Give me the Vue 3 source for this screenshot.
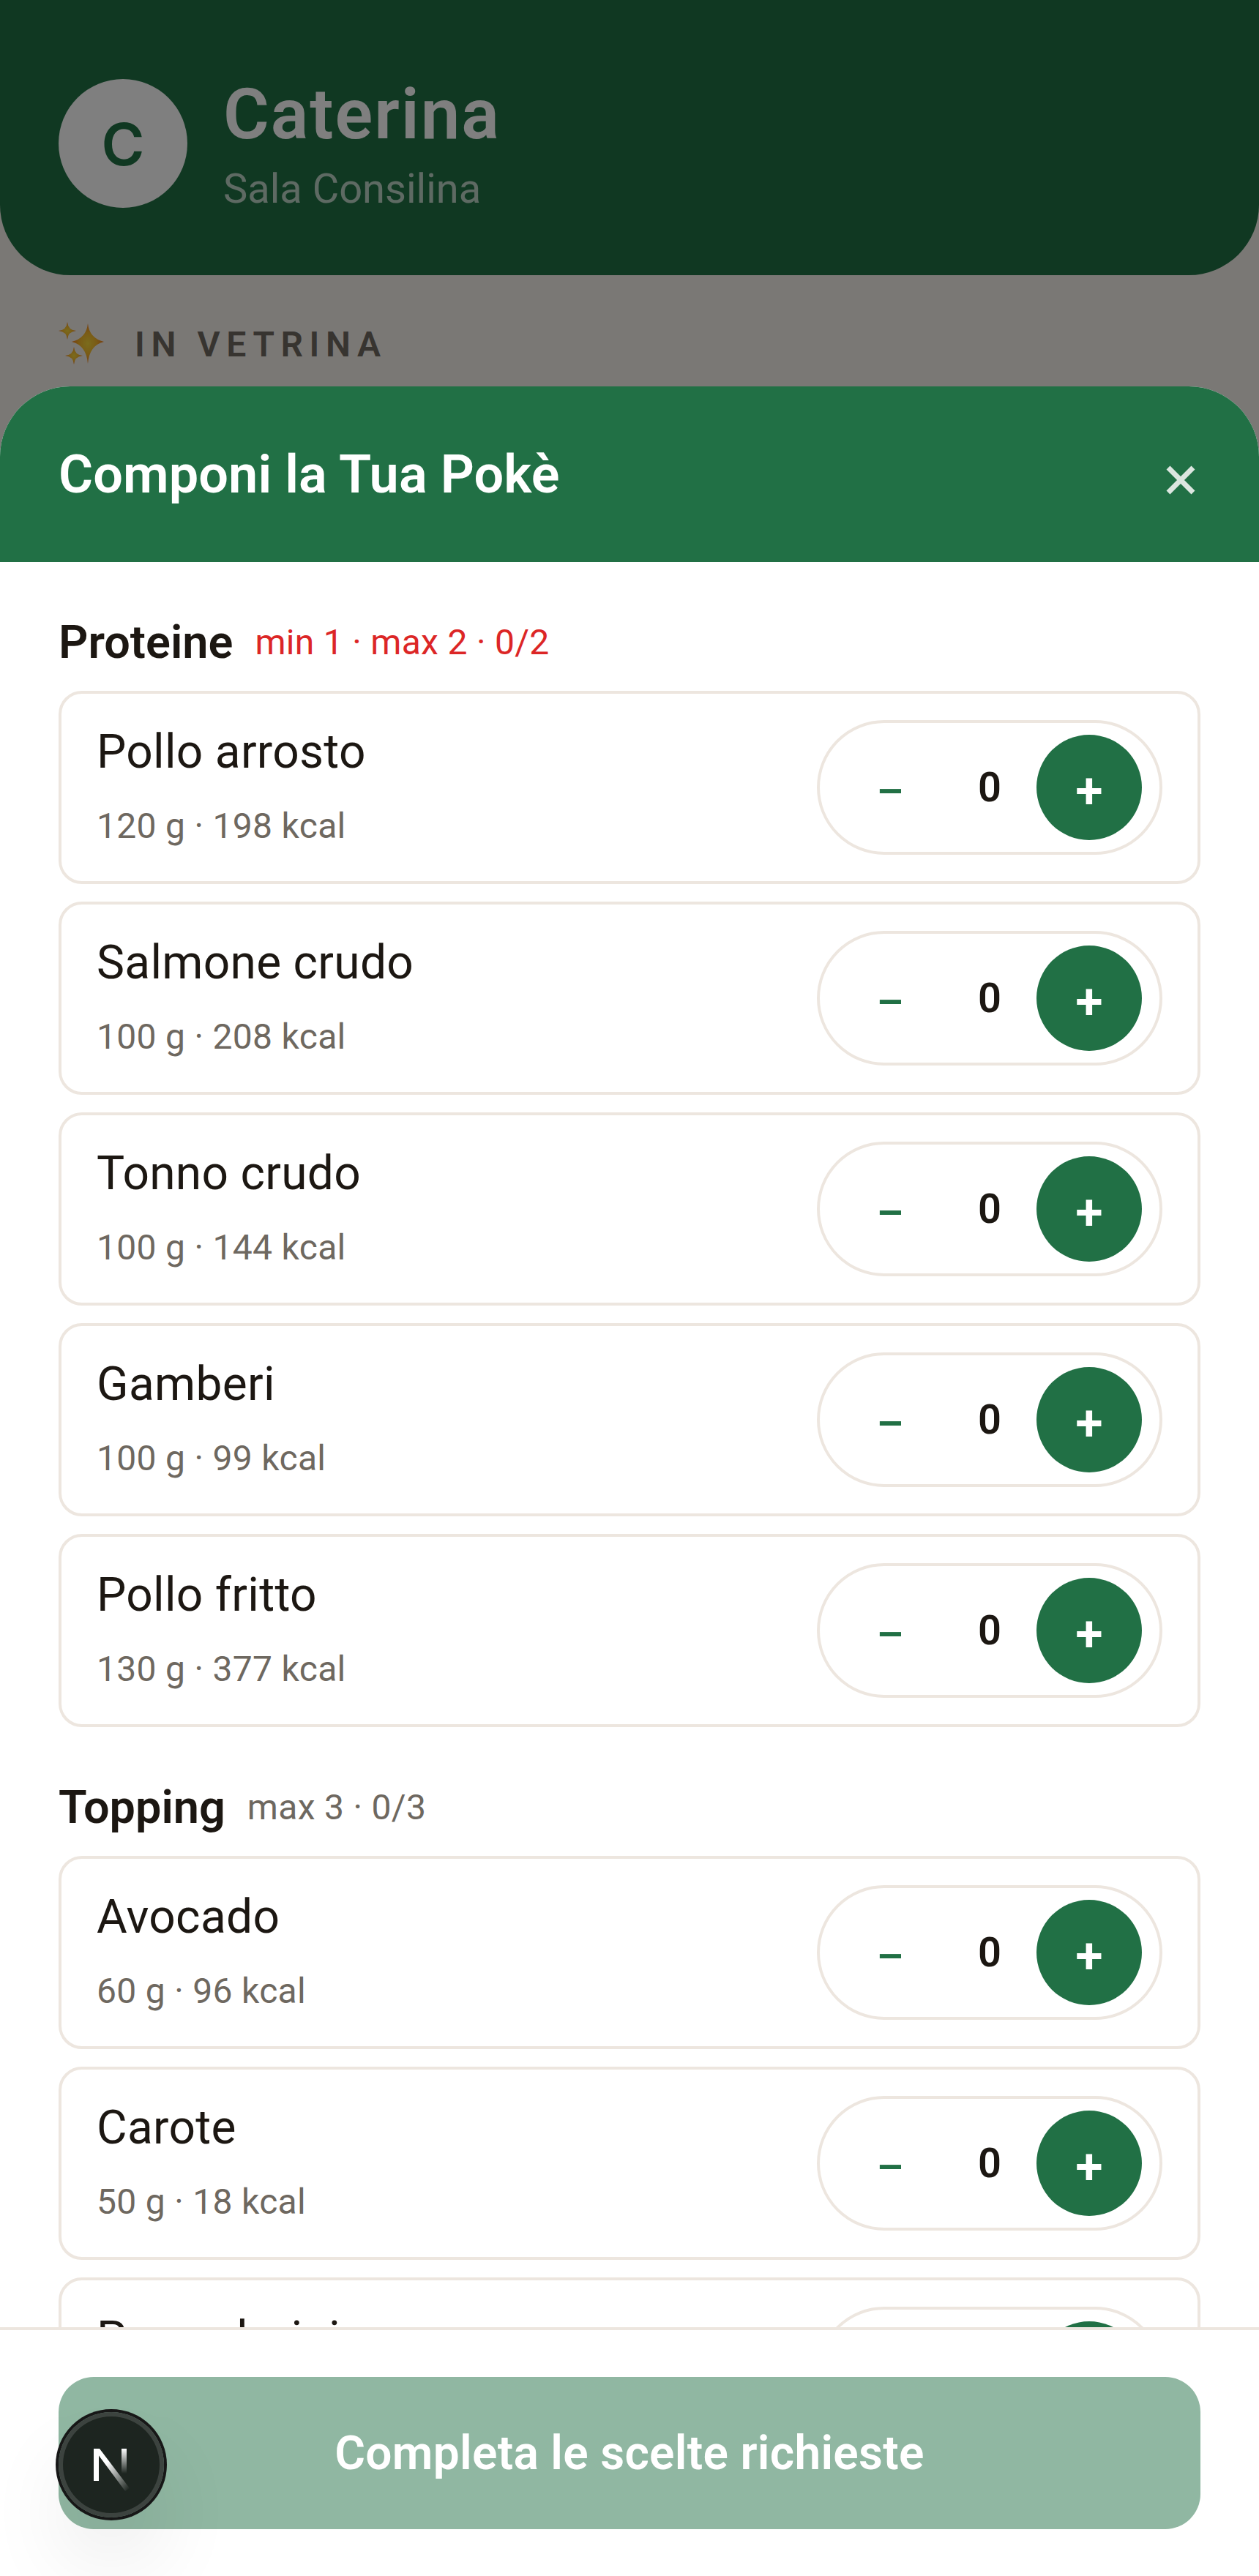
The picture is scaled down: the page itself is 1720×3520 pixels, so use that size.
<template>
  <div class="page">
    <header class="top">
      <div class="avatar">C</div>
      <div>
        <div class="name">Caterina</div>
        <div class="city">Sala Consilina</div>
      </div>
    </header>
    <div class="showcase">
      <svg class="stars" viewBox="0 0 64 60" width="64" height="60">
        <defs>
          <radialGradient id="gold">
            <stop offset="0" stop-color="#f6d83a" />
            <stop offset="0.55" stop-color="#f4b62c" />
            <stop offset="1" stop-color="#ee7a1c" />
          </radialGradient>
        </defs>
        <path fill="url(#gold)" d="M40 2 Q42 22 62 27 Q42 32 40 57 Q38 32 18 27 Q38 22 40 2Z" />
        <path fill="url(#gold)" d="M12 0 Q13 11 24 12 Q13 13 12 24 Q11 13 0 12 Q11 11 12 0Z" />
        <path fill="url(#gold)" d="M21 34 Q22 45 33 46 Q22 47 21 58 Q20 47 9 46 Q20 45 21 34Z" />
      </svg>
      <span>IN VETRINA</span>
    </div>

    <div class="overlay"></div>

    <section class="sheet">
      <div class="sheet-head">
        <h2>Componi la Tua Pokè</h2>
        <svg class="close" viewBox="0 0 40 40" width="40" height="40">
          <path d="M3 3 L37 37 M37 3 L3 37" stroke="#dce6e0" stroke-width="7" fill="none" />
        </svg>
      </div>
      <div class="sheet-body">
        <div v-for="group in groups" :key="group.title" class="group">
          <div class="group-head">
            <h3>{{ group.title }}</h3>
            <span :class="{ required: group.required }">{{ group.rule }}</span>
          </div>
          <div class="list">
            <div v-for="item in group.items" :key="item.name" class="card">
              <div class="item-text">
                <div class="item-name">{{ item.name }}</div>
                <div class="item-info">{{ item.info }}</div>
              </div>
              <div class="stepper">
                <button class="minus">–</button>
                <span class="count">0</span>
                <button class="plus">+</button>
              </div>
            </div>
          </div>
        </div>
      </div>
      <div class="sheet-foot">
        <button class="confirm">Completa le scelte richieste</button>
      </div>
    </section>

    <div class="dev-badge">
      <svg viewBox="0 0 56 60" width="56" height="60">
        <defs>
          <linearGradient id="fadeA" x1="0.3" y1="0.4" x2="0.95" y2="1">
            <stop offset="0" stop-color="#fff" />
            <stop offset="1" stop-color="#fff" stop-opacity="0" />
          </linearGradient>
          <linearGradient id="fadeB" x1="0" y1="0" x2="0" y2="1">
            <stop offset="0" stop-color="#fff" />
            <stop offset="1" stop-color="#fff" stop-opacity="0" />
          </linearGradient>
        </defs>
        <path fill="#fff" d="M4 2 H11 V46 H4Z" />
        <path fill="url(#fadeA)" d="M4 2 H12 L53 56 L47 60Z" />
        <rect fill="url(#fadeB)" x="42" y="2" width="7" height="34" />
      </svg>
    </div>
  </div>
</template>

<script setup>
const groups = [
  {
    title: 'Proteine',
    rule: 'min 1 · max 2 · 0/2',
    required: true,
    items: [
      { name: 'Pollo arrosto', info: '120 g · 198 kcal' },
      { name: 'Salmone crudo', info: '100 g · 208 kcal' },
      { name: 'Tonno crudo', info: '100 g · 144 kcal' },
      { name: 'Gamberi', info: '100 g · 99 kcal' },
      { name: 'Pollo fritto', info: '130 g · 377 kcal' },
    ],
  },
  {
    title: 'Topping',
    rule: 'max 3 · 0/3',
    items: [
      { name: 'Avocado', info: '60 g · 96 kcal' },
      { name: 'Carote', info: '50 g · 18 kcal' },
      { name: 'Pomodorini', info: '50 g · 9 kcal' },
    ],
  },
]
</script>

<style scoped>
.page {
  position: relative; width: 1720px; height: 3520px; overflow: hidden;
  background: #f5f0ea; font-family: Roboto, "Noto Sans", sans-serif; color: #1c1712;
}
.top {
  height: 376px; box-sizing: border-box; padding: 108px 80px 0; display: flex; gap: 49px;
  background: #217045; border-radius: 0 0 96px 96px;
}
.avatar {
  width: 176px; height: 176px; border-radius: 50%; background: #fff; color: #217045;
  display: flex; align-items: center; justify-content: center; font-family: Inter, sans-serif; font-size: 80px; font-weight: 600;
}
.name { font-size: 96px; font-weight: 600; letter-spacing: 2px; color: #fff; line-height: 120px; margin-top: -12px; }
.city { font-size: 56px; color: rgba(255, 255, 255, 0.7); line-height: 76px; margin-top: 4px; }
.showcase {
  display: flex; align-items: center; gap: 40px; padding: 64px 80px 0;
  font-size: 48px; font-weight: 600; letter-spacing: 8.6px; color: #6e6860;
}
.overlay { position: absolute; inset: 0; background: rgba(0, 0, 0, 0.5); }
.sheet {
  position: absolute; left: 0; right: 0; top: 528px; bottom: 0; display: flex; flex-direction: column;
  background: #fff; border-radius: 96px 96px 0 0; overflow: hidden;
}
.sheet-head {
  height: 240px; flex: none; display: flex; align-items: center; justify-content: space-between;
  padding: 0 87px 0 80px; background: #217045; color: #fff;
}
.sheet-head h2 { margin: 0; font-size: 72px; font-weight: 600; letter-spacing: 0.1px; }
.close { margin-top: 16px; }
.sheet-body { flex: 1; overflow: hidden; padding: 62px 80px 0; }
.group { margin-bottom: 62px; }
.group-head { display: flex; align-items: center; gap: 30px; height: 96px; margin-bottom: 18px; font-size: 48px; letter-spacing: 0.3px; line-height: 96px; color: #6e6860; }
.group-head h3 { margin: 0; font-size: 63px; font-weight: 600; letter-spacing: 0; color: #1c1712; line-height: 96px; }
.required { color: #dc2626; }
.list { display: flex; flex-direction: column; gap: 24px; }
.card {
  height: 264px; box-sizing: border-box; border: 4px solid #ede6df; border-radius: 32px;
  padding: 0 48px; display: flex; align-items: center; justify-content: space-between; background: #fff;
}
.item-text { padding-bottom: 5px; }
.item-name { font-size: 64px; line-height: 88px; letter-spacing: 0.3px; color: #1c1712; }
.item-info { font-size: 48px; line-height: 68px; letter-spacing: 0.3px; margin-top: 23px; color: #6e6860; }
.stepper {
  width: 472px; height: 184px; box-sizing: border-box; border: 4px solid #ede6df; border-radius: 92px;
  padding: 16px 24px; display: flex; align-items: center;
}
.stepper button {
  width: 144px; height: 144px; flex: none; border: 0; border-radius: 50%; padding: 10px 0 0;
  font-family: inherit; font-weight: 600; display: flex; align-items: center; justify-content: center;
}
.minus { background: transparent; color: #217045; font-size: 58px; }
.plus { background: #217045; color: #fff; font-size: 68px; }
.count { flex: 1; text-align: center; font-size: 56px; font-weight: 600; }
.sheet-foot { flex: none; background: #fff; border-top: 4px solid #ede6df; padding: 64px 80px; position: relative; }
.confirm {
  display: block; width: 100%; height: 208px; border: 0; border-radius: 48px; background: #90b7a2;
  color: #fff; font-family: inherit; font-size: 64px; font-weight: 600; letter-spacing: 0.3px;
}
.dev-badge {
  position: absolute; left: 80px; top: 3296px; width: 144px; height: 144px; border-radius: 50%;
  display: flex; align-items: center; justify-content: center; background: rgba(0, 0, 0, 0.8);
  box-shadow: 0 0 0 4px #171717, inset 0 0 0 6px rgba(255, 255, 255, 0.14), 0 64px 128px -32px rgba(0, 0, 0, 0.24);
}
.dev-badge svg { margin-top: 12px; }
</style>
